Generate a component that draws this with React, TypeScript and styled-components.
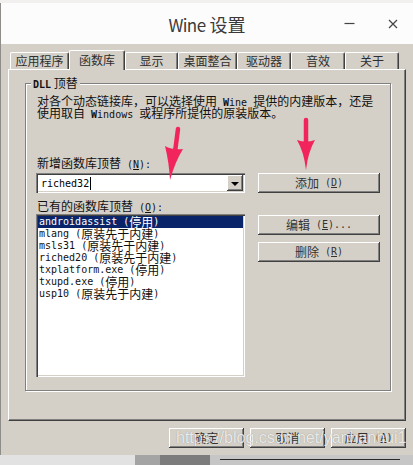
import React from "react";
import styled, { createGlobalStyle } from "styled-components";

const Global = createGlobalStyle`
  html, body { margin: 0; padding: 0; }
  body {
    width: 413px; height: 465px; overflow: hidden; background: #b4b2ae;
    font-family: "Noto Sans CJK SC", "Noto Sans", sans-serif;
  }
`;

const Page = styled.div`
  position: relative;
  width: 413px;
  height: 465px;
  display: flex;
  flex-direction: column;
  overflow: hidden;
`;

const TopStrip = styled.div`
  flex: none;
  height: 3px;
  background: #f1f0ef;
`;

const Middle = styled.div`
  flex: none;
  display: flex;
  height: 452px;
`;

const LeftStrip = styled.div`
  width: 2px;
  background: #8f8d89;
`;

const Window = styled.div`
  flex: 1;
  display: flex;
  flex-direction: column;
`;

const TitleBar = styled.div`
  flex: none;
  height: 41px;
  background: #fcfcfc;
  display: grid;
  grid-template-columns: 1fr auto 1fr;
  align-items: center;
`;

const Title = styled.div`
  grid-column: 2;
  font-family: "Noto Sans CJK SC", "Noto Sans", sans-serif;
  font-size: 18px;
  color: #3a3a3a;
  white-space: pre;
  margin-top: 1px;
`;

const TitleLatin = styled.span`
  font-size: 17px;
  letter-spacing: -0.6px;
`;

const Controls = styled.div`
  justify-self: end;
  display: flex;
  align-items: center;
  gap: 33px;
  padding-right: 15px;
`;

const Body = styled.div`
  flex: 1;
  background: #d4d0c8;
  display: flex;
  flex-direction: column;
  padding: 6px 7px 0 7px;
`;

const TabRow = styled.div`
  position: relative;
  z-index: 1;
  display: flex;
  align-items: flex-end;
  height: 20px;
  padding-left: 2px;
  margin-bottom: -1px;
`;

const Tab = styled.div<{ $w: number; $active?: boolean }>`
  box-sizing: border-box;
  width: ${(p) => p.$w}px;
  height: ${(p) => (p.$active ? 20 : 17)}px;
  margin-bottom: ${(p) => (p.$active ? 0 : 1)}px;
  background: #d4d0c8;
  border-top: 1px solid #ffffff;
  border-left: 1px solid #ffffff;
  border-right: 1px solid #404040;
  box-shadow: inset -1px 0 #808080;
  border-radius: 2px 2px 0 0;
  display: flex;
  align-items: center;
  justify-content: center;
  padding-bottom: ${(p) => (p.$active ? 2 : 0)}px;
  font-size: 12px;
  line-height: 12px;
  color: #2e2e2e;
`;

const Panel = styled.div`
  box-sizing: border-box;
  height: 352px;
  background: #d4d0c8;
  border-top: 1px solid #ffffff;
  border-left: 1px solid #ffffff;
  border-right: 1px solid #404040;
  border-bottom: 1px solid #404040;
  box-shadow: inset -1px -1px #808080;
  padding: 13px 14px 0 16px;
`;

const GroupBox = styled.div`
  position: relative;
  box-sizing: border-box;
  height: 308px;
  border: 1px solid #808080;
  box-shadow: 1px 1px 0 #ffffff, inset 1px 1px 0 #ffffff;
  padding: 11px 10px 0 11px;
`;

const GroupLabel = styled.div`
  position: absolute;
  top: -7px;
  left: 5px;
  padding: 0 2px;
  background: #d4d0c8;
  font-size: 12px;
  line-height: 12px;
  color: #111;
`;

const Lat = styled.span<{ $bold?: boolean }>`
  font-family: "DejaVu Sans Mono", "Liberation Mono", monospace;
  font-size: 10px;
  white-space: pre;
  font-weight: ${(p) => (p.$bold ? 700 : 400)};
`;

const U = styled.span`
  text-decoration: underline;
`;

const DescLine = styled.div`
  height: 12px;
  font-size: 12px;
  line-height: 12px;
  color: #111;
  white-space: nowrap;
`;

const Form = styled.div`
  display: grid;
  grid-template-columns: 209px 122px;
  column-gap: 13px;
  margin-top: 38px;
  margin-left: -1px;
`;

const FieldLabel = styled.div<{ $top: number; $bottom: number }>`
  grid-column: 1 / -1;
  height: 12px;
  font-size: 12px;
  line-height: 12px;
  color: #111;
  padding-left: 1px;
  margin-top: ${(p) => p.$top}px;
  margin-bottom: ${(p) => p.$bottom}px;
  white-space: nowrap;
`;

const sunken = `
  box-shadow: inset 1px 1px #808080, inset 2px 2px #404040,
    inset -1px -1px #ffffff, inset -2px -2px #d4d0c8;
`;

const raised = `
  box-shadow: inset -1px -1px #404040, inset 1px 1px #ffffff,
    inset -2px -2px #808080;
`;

const Combo = styled.div`
  box-sizing: border-box;
  height: 20px;
  background: #ffffff;
  ${sunken}
  padding: 2px;
  display: flex;
  align-items: center;
`;

const ComboText = styled.div`
  flex: 1;
  display: flex;
  align-items: center;
  padding-left: 3px;
  color: #000;
`;

const Caret = styled.span`
  display: inline-block;
  width: 1px;
  height: 13px;
  background: #000;
  margin-left: 1px;
`;

const DropButton = styled.div`
  box-sizing: border-box;
  width: 16px;
  height: 16px;
  background: #d4d0c8;
  ${raised}
  display: flex;
  align-items: center;
  justify-content: center;
  &::after {
    content: "";
    width: 0;
    height: 0;
    border-left: 4px solid transparent;
    border-right: 4px solid transparent;
    border-top: 4px solid #000;
    margin-top: 1px;
  }
`;

const Button = styled.button<{ $w?: number }>`
  box-sizing: border-box;
  width: ${(p) => (p.$w ? `${p.$w}px` : "100%")};
  height: 20px;
  margin: 0;
  padding: 0;
  border: none;
  background: #d4d0c8;
  ${raised}
  display: flex;
  align-items: center;
  justify-content: center;
  font-family: "Noto Sans CJK SC", "Noto Sans", sans-serif;
  font-size: 12px;
  line-height: 12px;
  color: #333;
  white-space: pre;
`;

const List = styled.div`
  box-sizing: border-box;
  height: 163px;
  background: #ffffff;
  ${sunken}
  padding: 2px;
`;

const Item = styled.div<{ $selected?: boolean }>`
  height: 12px;
  display: flex;
  align-items: center;
  padding-left: 1px;
  font-size: 12px;
  line-height: 12px;
  white-space: pre;
  background: ${(p) => (p.$selected ? "#0a246a" : "transparent")};
  color: ${(p) => (p.$selected ? "#ffffff" : "#111")};
`;

const ButtonStack = styled.div`
  display: flex;
  flex-direction: column;
  gap: 7px;
  margin-top: 1px;
`;

const ButtonBar = styled.div`
  display: flex;
  justify-content: flex-end;
  gap: 6px;
  margin-top: 7px;
`;

const BottomStrip = styled.div`
  flex: 1;
  background: linear-gradient(#2a2a2a, #2a2a2a) 220px 4px / 180px 1px no-repeat,
    linear-gradient(to right, #e2e2e2 0 135px, #a4a4a4 135px 160px, #7c7c7c 160px 210px, #c6c6c6 210px);
`;

const Watermark = styled.div`
  position: absolute;
  left: 176px;
  top: 429px;
  font-family: "Liberation Sans", Arial, sans-serif;
  font-size: 16px;
  color: rgba(255, 255, 255, 0.82);
  text-shadow: 0 0 1px rgba(0, 0, 0, 0.35);
  white-space: nowrap;
  pointer-events: none;
`;

const Overlay = styled.svg`
  position: absolute;
  left: 0;
  top: 0;
  pointer-events: none;
`;

const tabs: { label: string; w: number; active?: boolean }[] = [
  { label: "应用程序", w: 59 },
  { label: "函数库", w: 56, active: true },
  { label: "显示", w: 53 },
  { label: "桌面整合", w: 59 },
  { label: "驱动器", w: 54 },
  { label: "音效", w: 54 },
  { label: "关于", w: 54 },
];

const items: { name: string; note: string; selected?: boolean }[] = [
  { name: "androidassist", note: "停用", selected: true },
  { name: "mlang", note: "原装先于内建" },
  { name: "msls31", note: "原装先于内建" },
  { name: "riched20", note: "原装先于内建" },
  { name: "txplatform.exe", note: "停用" },
  { name: "txupd.exe", note: "停用" },
  { name: "usp10", note: "原装先于内建" },
];

export default function App() {
  return (
    <Page>
      <Global />
      <TopStrip />
      <Middle>
        <LeftStrip />
        <Window>
          <TitleBar>
            <Title>
              <TitleLatin>Wine</TitleLatin> 设置
            </Title>
            <Controls>
              <svg width="11" height="11" viewBox="0 0 11 11">
                <line x1="0.5" y1="5.5" x2="10.5" y2="5.5" stroke="#444" strokeWidth="1.2" />
              </svg>
              <svg width="10" height="10" viewBox="0 0 10 10">
                <path d="M1 1 L9 9 M9 1 L1 9" stroke="#444" strokeWidth="1.2" />
              </svg>
            </Controls>
          </TitleBar>
          <Body>
            <TabRow>
              {tabs.map((t) => (
                <Tab key={t.label} $w={t.w} $active={t.active}>
                  {t.label}
                </Tab>
              ))}
            </TabRow>
            <Panel>
              <GroupBox>
                <GroupLabel>
                  <Lat $bold>DLL</Lat> 顶替
                </GroupLabel>
                <DescLine>
                  对各个动态链接库，可以选择使用<Lat $bold> W</Lat>
                  <Lat>ine </Lat>提供的内建版本，还是
                </DescLine>
                <DescLine>
                  使用取自<Lat> </Lat>
                  <Lat $bold>W</Lat>
                  <Lat>indows </Lat>或程序所提供的原装版本。
                </DescLine>
                <Form>
                  <FieldLabel $top={0} $bottom={4}>
                    新增函数库顶替<Lat> (</Lat>
                    <Lat>
                      <U>N</U>
                    </Lat>
                    <Lat>):</Lat>
                  </FieldLabel>
                  <Combo>
                    <ComboText>
                      <Lat>riched32</Lat>
                      <Caret />
                    </ComboText>
                    <DropButton />
                  </Combo>
                  <Button>
                    添加<Lat> (</Lat>
                    <Lat>
                      <U>D</U>
                    </Lat>
                    <Lat>)</Lat>
                  </Button>
                  <FieldLabel $top={7} $bottom={2}>
                    已有的函数库顶替<Lat> (</Lat>
                    <Lat>
                      <U>O</U>
                    </Lat>
                    <Lat>):</Lat>
                  </FieldLabel>
                  <List>
                    {items.map((it) => (
                      <Item key={it.name} $selected={it.selected}>
                        <Lat>{it.name} (</Lat>
                        {it.note}
                        <Lat>)</Lat>
                      </Item>
                    ))}
                  </List>
                  <ButtonStack>
                    <Button>
                      编辑<Lat> (</Lat>
                      <Lat>
                        <U>E</U>
                      </Lat>
                      <Lat>)...</Lat>
                    </Button>
                    <Button>
                      删除<Lat> (</Lat>
                      <Lat>
                        <U>R</U>
                      </Lat>
                      <Lat>)</Lat>
                    </Button>
                  </ButtonStack>
                </Form>
              </GroupBox>
            </Panel>
            <ButtonBar>
              <Button $w={75}>确定</Button>
              <Button $w={75}>取消</Button>
              <Button $w={75}>
                应用<Lat> (</Lat>
                <Lat>
                  <U>A</U>
                </Lat>
                <Lat>)</Lat>
              </Button>
            </ButtonBar>
          </Body>
        </Window>
      </Middle>
      <BottomStrip />
      <Watermark>https://blog.csdn.net/yanhanhui1</Watermark>
      <Overlay width="413" height="465" viewBox="0 0 413 465">
        <line x1="178" y1="129" x2="175" y2="152" stroke="#f2245c" strokeWidth="4.5" strokeLinecap="round" />
        <path d="M165 146 Q172 150 183 149 Q175 162 170 180 Q169 162 165 146 Z" fill="#f2245c" />
        <line x1="306" y1="120" x2="306" y2="144" stroke="#f2245c" strokeWidth="4.5" strokeLinecap="round" />
        <path d="M297 140 Q306 143 315 140 Q308 152 306 170 Q304 152 297 140 Z" fill="#f2245c" />
      </Overlay>
    </Page>
  );
}
